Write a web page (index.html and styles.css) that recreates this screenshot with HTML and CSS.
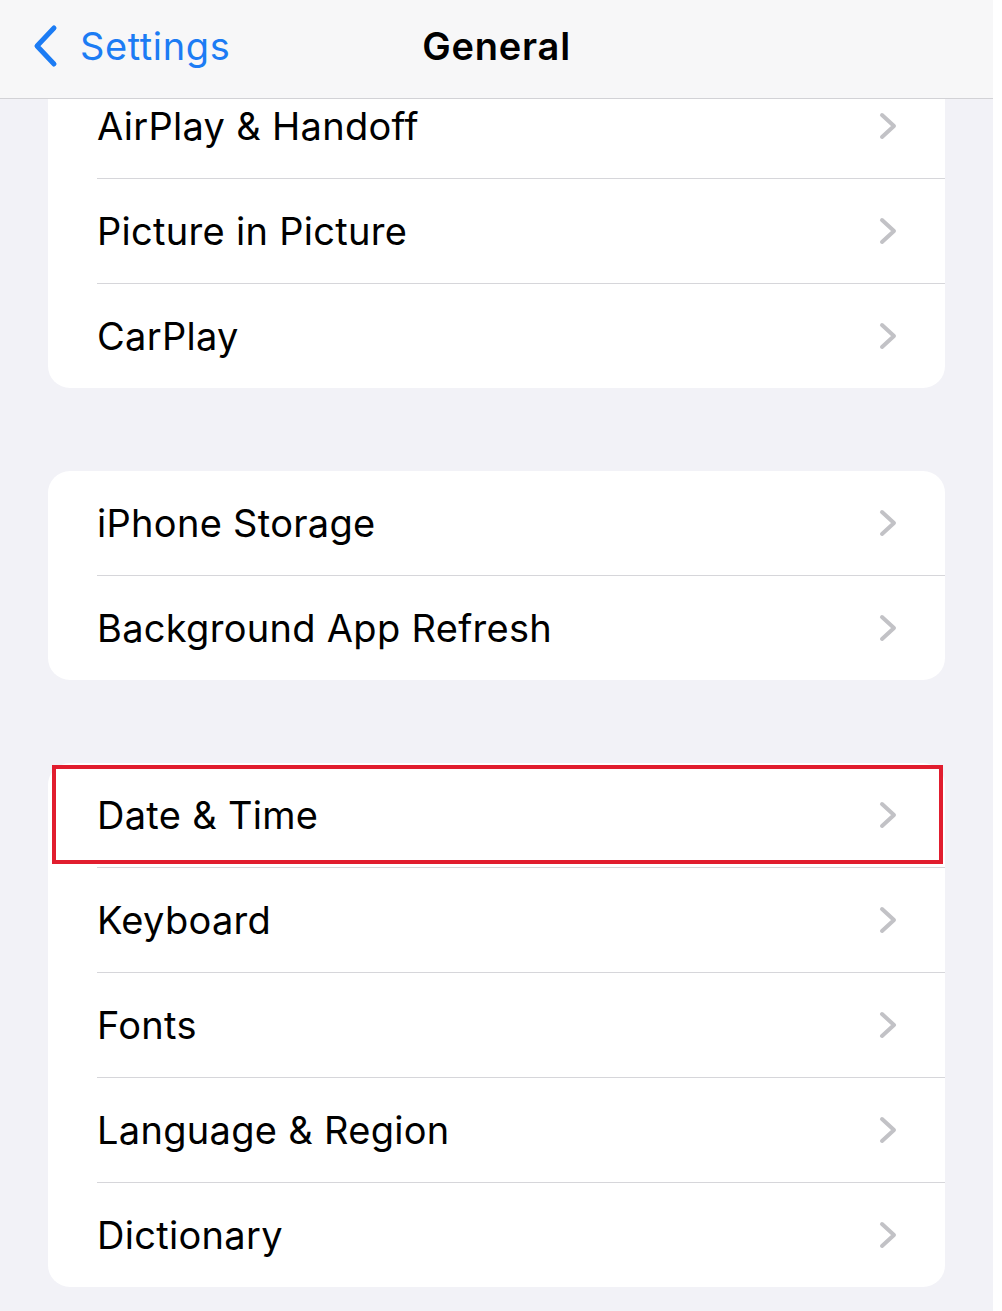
FILE: index.html
```html
<!DOCTYPE html>
<html lang="en">
<head>
  <title>General | Settings</title>
  <meta charset="UTF-8" />
  <meta name="viewport" content="width=device-width, initial-scale=1.0" />
  <link rel="stylesheet" href="styles.css">
</head>
<body>
  <div class="phone">
    <div class="navbar">
      <a class="back" href="#">
        <svg class="back-icon" viewBox="0 0 26 44" width="26" height="44">
          <path d="M22 4 L5 22 L22 40" />
        </svg>
        <span>Settings</span>
      </a>
      <h1 class="title">General</h1>
      <div></div>
    </div>

    <div class="list">
      <div class="group first">
        <div class="row"><span>AirPlay &amp; Handoff</span><svg class="chevron" viewBox="0 0 18 28"><path d="M3 3 L15 14 L3 25" /></svg></div>
        <div class="row"><span>Picture in Picture</span><svg class="chevron" viewBox="0 0 18 28"><path d="M3 3 L15 14 L3 25" /></svg></div>
        <div class="row"><span>CarPlay</span><svg class="chevron" viewBox="0 0 18 28"><path d="M3 3 L15 14 L3 25" /></svg></div>
      </div>

      <div class="group">
        <div class="row"><span>iPhone Storage</span><svg class="chevron" viewBox="0 0 18 28"><path d="M3 3 L15 14 L3 25" /></svg></div>
        <div class="row"><span>Background App Refresh</span><svg class="chevron" viewBox="0 0 18 28"><path d="M3 3 L15 14 L3 25" /></svg></div>
      </div>

      <div class="group">
        <div class="row highlight"><span>Date &amp; Time</span><svg class="chevron" viewBox="0 0 18 28"><path d="M3 3 L15 14 L3 25" /></svg></div>
        <div class="row"><span>Keyboard</span><svg class="chevron" viewBox="0 0 18 28"><path d="M3 3 L15 14 L3 25" /></svg></div>
        <div class="row"><span>Fonts</span><svg class="chevron" viewBox="0 0 18 28"><path d="M3 3 L15 14 L3 25" /></svg></div>
        <div class="row"><span>Language &amp; Region</span><svg class="chevron" viewBox="0 0 18 28"><path d="M3 3 L15 14 L3 25" /></svg></div>
        <div class="row"><span>Dictionary</span><svg class="chevron" viewBox="0 0 18 28"><path d="M3 3 L15 14 L3 25" /></svg></div>
      </div>
    </div>
  </div>
</body>
</html>
```

FILE: styles.css
```css
:root {
  --blue: #1c7cf4;
  --bg: #f2f2f7;
  --nav: #f7f7f8;
  --card: #ffffff;
  --line: #d6d6da;
  --chevron: #c2c2c6;
  --text: #000;
  --mark: #e11d2e;
}

body {
  margin: 0;
  background: #fff;
  font-family: 'Inter', 'Noto Sans', sans-serif;
  color: var(--text);
}

.phone {
  width: 993px;
  height: 1311px;
  background: var(--bg);
  overflow: hidden;
}

.navbar {
  position: relative;
  z-index: 1;
  box-sizing: border-box;
  height: 99px;
  padding-bottom: 6px;
  background: var(--nav);
  border-bottom: 1px solid #d2d2d6;
  display: grid;
  grid-template-columns: 1fr auto 1fr;
  align-items: center;
}

.back {
  display: flex;
  align-items: center;
  gap: 22px;
  padding-left: 32px;
  color: var(--blue);
  text-decoration: none;
  font-size: 38px;
  letter-spacing: 0.6px;
}

.back-icon path {
  fill: none;
  stroke: var(--blue);
  stroke-width: 5;
  stroke-linecap: round;
  stroke-linejoin: round;
}

.title {
  margin: 0;
  font-size: 38px;
  font-weight: 600;
  letter-spacing: 0.8px;
}

.list {
  display: flex;
  flex-direction: column;
  gap: 83px;
}

.group {
  margin: 0 48px;
  background: var(--card);
  border-radius: 22px;
}

.group.first {
  margin-top: -25px;
}

.row {
  position: relative;
  height: 104px;
  margin-left: 49px;
  padding-right: 48px;
  display: flex;
  align-items: center;
  justify-content: space-between;
  font-size: 38px;
  letter-spacing: 0.3px;
}

.row + .row {
  border-top: 1px solid var(--line);
}

.chevron {
  width: 18px;
  height: 28px;
}

.chevron path {
  fill: none;
  stroke: var(--chevron);
  stroke-width: 4;
  stroke-linecap: round;
  stroke-linejoin: round;
}

.highlight::after {
  content: "";
  position: absolute;
  top: 2px;
  bottom: 3px;
  left: -45px;
  right: 2px;
  border: 4px solid var(--mark);
}
```
